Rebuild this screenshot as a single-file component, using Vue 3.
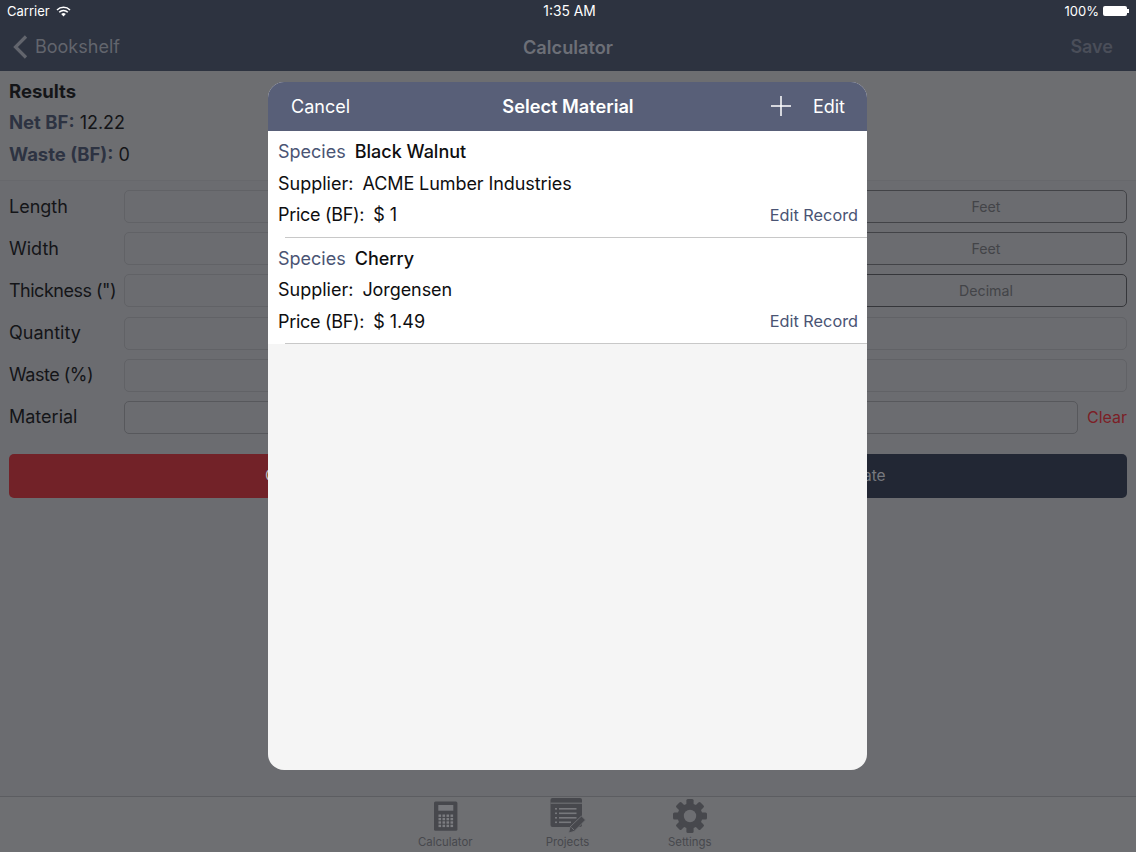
<template>
  <div class="screen">
    <div class="statusbar">
      <div class="status-left">
        <span>Carrier</span>
        <svg class="wifi" width="15" height="11" viewBox="0 0 15 11">
          <path d="M1 4 A9.2 9.2 0 0 1 14 4" fill="none" stroke="#fff" stroke-width="1.5" />
          <path d="M3.2 6.2 A6.1 6.1 0 0 1 11.8 6.2" fill="none" stroke="#fff" stroke-width="1.5" />
          <path d="M7.5 10.6 L5.2 8.1 A3.2 3.2 0 0 1 9.8 8.1 Z" fill="#fff" />
        </svg>
      </div>
      <span class="status-time">1:35 AM</span>
      <div class="status-right">
        <span>100%</span>
        <span class="battery"><i></i></span>
      </div>
    </div>

    <nav class="navbar">
      <div class="back">
        <svg width="16" height="24" viewBox="0 0 16 24">
          <path d="M14 1.5 L3.5 12 L14 22.5" fill="none" stroke="#62656d" stroke-width="3.2" />
        </svg>
        <span>Bookshelf</span>
      </div>
      <span class="nav-title">Calculator</span>
      <span class="nav-save">Save</span>
    </nav>

    <section class="results">
      <h3>Results</h3>
      <p><b>Net BF:</b> 12.22</p>
      <p><b>Waste (BF):</b> 0</p>
    </section>

    <section class="form">
      <div v-for="row in rows" :key="row.label" class="form-row">
        <label :class="{ tight: row.label.includes('(') }">{{ row.label }}</label>
        <div class="field" :class="{ strong: row.clear }"></div>
        <div v-if="row.unit" class="unit" :class="{ strong: row.unit === 'Decimal' }">{{ row.unit }}</div>
        <span v-if="row.clear" class="clear">Clear</span>
      </div>
      <div class="actions">
        <button class="btn red">Clear</button>
        <button class="btn dark">Calculate</button>
      </div>
    </section>

    <footer class="tabbar">
      <div class="tab">
        <svg width="36" height="36" viewBox="0 0 36 36">
          <rect x="7" y="3.5" width="23.4" height="29.2" rx="1.5" fill="#47484d" />
          <rect x="11.3" y="7" width="15" height="5.7" fill="#77787c" />
          <g fill="#7c7d81">
            <rect v-for="k in keys" :key="k.id" :x="k.x" :y="k.y" width="2.6" height="2.4" />
          </g>
        </svg>
        <span>Calculator</span>
      </div>
      <div class="tab">
        <svg width="38" height="36" viewBox="0 0 38 36">
          <rect x="1.5" y="0" width="31.5" height="29" rx="2" fill="#47484d" />
          <rect x="1.5" y="4.6" width="31.5" height="1.2" fill="#6d6e72" />
          <g fill="#77787c">
            <rect x="10" y="10" width="17.5" height="1.6" />
            <rect x="10" y="14.5" width="17.5" height="1.6" />
            <rect x="10" y="19" width="17.5" height="1.6" />
            <rect x="10" y="23.5" width="12" height="1.6" />
            <rect x="6" y="10" width="2" height="1.6" />
            <rect x="6" y="14.5" width="2" height="1.6" />
            <rect x="6" y="19" width="2" height="1.6" />
            <rect x="6" y="23.5" width="2" height="1.6" />
          </g>
          <path d="M19.5 35 L21 29 L32.5 18 L36.5 22 L25 33.5 Z" fill="#47484d" stroke="#6d6e72" stroke-width="1" />
          <path d="M22.5 29.5 L25 32" stroke="#6d6e72" stroke-width="1" />
        </svg>
        <span>Projects</span>
      </div>
      <div class="tab">
        <svg width="36" height="36" viewBox="0 0 36 36">
          <g fill="#47484d">
            <rect v-for="a in teeth" :key="a" x="14.4" y="1" width="7.2" height="34" rx="1.5" :transform="`rotate(${a} 18 18)`" />
          </g>
          <circle cx="18" cy="18" r="12.5" fill="#47484d" />
          <circle cx="18" cy="18" r="6.2" fill="#6d6e72" />
        </svg>
        <span>Settings</span>
      </div>
    </footer>

    <div class="modal">
      <header class="modal-head">
        <span class="cancel">Cancel</span>
        <span class="modal-title">Select Material</span>
        <div class="modal-actions">
          <svg width="20" height="20" viewBox="0 0 20 20">
            <path d="M10 0 V20 M0 10 H20" stroke="#fff" stroke-width="1.5" />
          </svg>
          <span>Edit</span>
        </div>
      </header>
      <div v-for="m in materials" :key="m.species" class="material">
        <div class="line"><span class="species">Species</span><span class="species-name">{{ m.species }}</span></div>
        <div class="line"><span>Supplier:</span><span class="supplier">{{ m.supplier }}</span></div>
        <div class="line">
          <span class="price-label">Price (BF):</span><span>$ {{ m.price }}</span>
          <span class="edit-record">Edit Record</span>
        </div>
      </div>
    </div>
  </div>
</template>

<script setup>
const rows = [
  { label: 'Length', unit: 'Feet' },
  { label: 'Width', unit: 'Feet' },
  { label: 'Thickness (")', unit: 'Decimal' },
  { label: 'Quantity' },
  { label: 'Waste (%)' },
  { label: 'Material', clear: true }
]

const materials = [
  { species: 'Black Walnut', supplier: 'ACME Lumber Industries', price: '1' },
  { species: 'Cherry', supplier: 'Jorgensen', price: '1.49' }
]

const teeth = [0, 45, 90, 135]

const keys = []
for (let r = 0; r < 4; r++) {
  for (let c = 0; c < 4; c++) {
    keys.push({ id: r * 4 + c, x: 11.5 + c * 4, y: 16.5 + r * 3.4 })
  }
}
</script>

<style>
html,
body {
  margin: 0;
  background: #6e6f72;
}
</style>

<style scoped>
.screen {
  position: relative;
  width: 1136px;
  height: 852px;
  overflow: hidden;
  display: flex;
  flex-direction: column;
  background: #6e6f72;
  font-family: Inter, "Liberation Sans", sans-serif;
  color: #141518;
}

.statusbar {
  height: 22px;
  flex: none;
  display: grid;
  grid-template-columns: 1fr auto 1fr;
  align-items: center;
  padding: 0 7px;
  background: #2d3340;
  color: #fff;
  font-size: 13px;
}

.status-time {
  font-size: 13.8px;
  margin-left: 3px;
}

.status-left {
  display: flex;
  align-items: center;
  gap: 6px;
}

.status-right {
  display: flex;
  align-items: center;
  justify-content: flex-end;
  gap: 4px;
}

.battery {
  position: relative;
  display: block;
  width: 24px;
  height: 10px;
  border-radius: 2px;
  box-sizing: border-box;
  margin-right: 2px;
  background: #fff;
}

.battery::after {
  content: '';
  position: absolute;
  right: -2px;
  top: 3px;
  width: 2px;
  height: 4px;
  background: #fff;
}

.navbar {
  height: 49px;
  flex: none;
  box-sizing: border-box;
  display: grid;
  grid-template-columns: 1fr auto 1fr;
  align-items: center;
  padding: 0 23px 0 12px;
  background: #2d3340;
  font-size: 18px;
}

.back {
  display: flex;
  align-items: center;
  gap: 7px;
  color: #62656d;
}

.nav-title {
  color: #6c6f77;
  font-weight: 600;
  font-size: 18.2px;
  margin-left: 11px;
}

.nav-save {
  justify-self: end;
  color: #4a4e59;
  font-weight: 600;
}

.results {
  height: 109px;
  flex: none;
  box-sizing: border-box;
  padding: 9px 9px 0;
  background: #6d6e71;
  font-size: 18px;
}

.results h3 {
  margin: 0;
  height: 22px;
  line-height: 22px;
  font-size: 18.5px;
  font-weight: 700;
}

.results p {
  margin: 10px 0 0;
  height: 22px;
  line-height: 21px;
}

.results b {
  color: #2d3342;
  font-size: 18.5px;
  font-weight: 700;
}

.form {
  flex: 1;
  padding: 9px 9px 0;
  background: #6b6c70;
  border-top: 1px solid #67686c;
  display: flex;
  flex-direction: column;
  gap: 9.2px;
}

.form-row {
  display: flex;
  align-items: center;
  height: 33px;
  font-size: 18px;
}

.form-row label {
  width: 115px;
  flex: none;
  white-space: nowrap;
  margin-top: -1px;
}

.form-row label.tight {
  letter-spacing: -0.5px;
}

.field {
  flex: 1;
  height: 33px;
  box-sizing: border-box;
  border: 1px solid #616266;
  border-radius: 5px;
}

.field.strong {
  border-color: #57585c;
}

.unit {
  width: 282px;
  height: 33px;
  margin-left: 10px;
  box-sizing: border-box;
  border: 1.5px solid #424347;
  border-radius: 5px;
  display: flex;
  align-items: center;
  justify-content: center;
  color: #434448;
  font-size: 14.2px;
}

.unit.strong {
  border-color: #35363a;
}

.clear {
  margin-left: 9px;
  width: 40px;
  color: #7c1e26;
  font-size: 16px;
  margin-top: -1px;
}

.actions {
  display: flex;
  gap: 16px;
  margin-top: 10.8px;
}

.btn {
  flex: 1;
  height: 44px;
  border: none;
  border-radius: 5px;
  font: inherit;
  font-size: 15.5px;
}

.red {
  background: #722228;
  color: #b9b9ba;
}

.dark {
  background: #222734;
  color: #77797f;
}

.tabbar {
  height: 56px;
  flex: none;
  box-sizing: border-box;
  border-top: 1px solid #5c5d61;
  padding: 1px 1px 0 0;
  display: flex;
  justify-content: center;
  gap: 70.25px;
  background: #6e6f72;
}

.tab {
  width: 52px;
  display: flex;
  flex-direction: column;
  align-items: center;
  color: #47484d;
  font-size: 11.4px;
  line-height: 13px;
}

.tab svg {
  flex: none;
  margin-bottom: 2px;
}

.modal {
  position: absolute;
  left: 268px;
  top: 82px;
  width: 599px;
  height: 688px;
  border-radius: 16px;
  overflow: hidden;
  background: #f5f5f5;
  font-size: 18px;
  color: #0e0e10;
}

.modal-head {
  height: 49px;
  box-sizing: border-box;
  display: grid;
  grid-template-columns: 1fr auto 1fr;
  align-items: center;
  padding: 0 22px 1px 23px;
  background: #585f78;
  color: #fff;
}

.modal-title {
  font-weight: 600;
  font-size: 18.2px;
}

.modal-actions {
  display: flex;
  justify-content: flex-end;
  align-items: center;
  gap: 22px;
}

.modal-actions svg {
  margin-bottom: 1px;
}

.material {
  position: relative;
  height: 106.5px;
  box-sizing: border-box;
  padding: 5px 9px 0 10px;
  background: #fff;
}

.material::after {
  content: '';
  position: absolute;
  left: 17px;
  right: 0;
  bottom: 0;
  height: 1px;
  background: #c8c8c8;
}

.line {
  display: flex;
  align-items: center;
  gap: 9px;
  height: 31.5px;
}

.species {
  color: #4a5474;
}

.species-name {
  font-weight: 500;
}

.supplier {
  letter-spacing: -0.08px;
}

.price-label {
  letter-spacing: -0.3px;
}

.edit-record {
  margin-left: auto;
  color: #4a5474;
  font-size: 16.3px;
}
</style>
